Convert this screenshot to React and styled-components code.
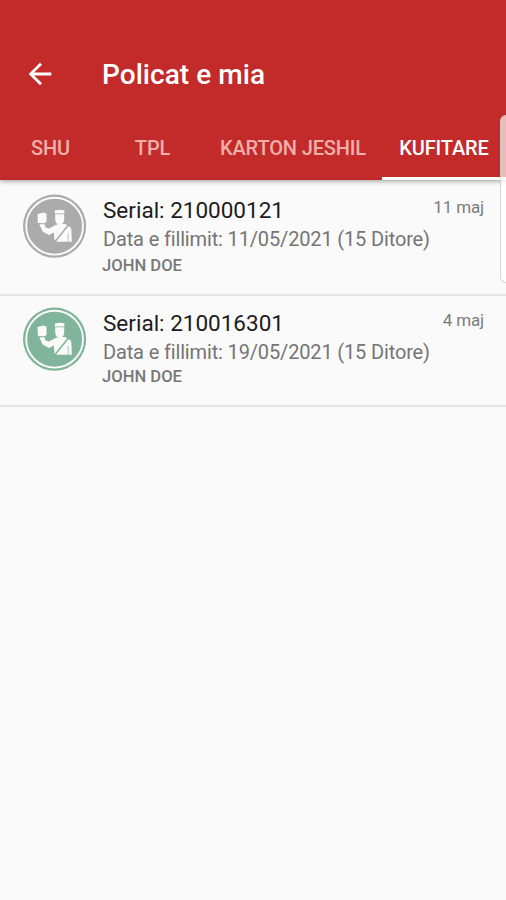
import React from "react";
import styled, { createGlobalStyle } from "styled-components";

const Global = createGlobalStyle`
  * { box-sizing: border-box; }
  body { margin: 0; background: #fafafa; font-family: Roboto, "Noto Sans", sans-serif; }
`;

const Screen = styled.div`
  position: relative;
  width: 506px;
  height: 900px;
  overflow: hidden;
  background: #fafafa;
`;

const Header = styled.header`
  position: relative;
  height: 180px;
  padding-top: 35px;
  background: #c32a2a;
  box-shadow: 0 1px 5px rgba(0, 0, 0, 0.4);
`;

const AppBar = styled.div`
  display: flex;
  align-items: center;
  height: 80px;
  padding-left: 23px;
`;

const BackButton = styled.button`
  display: flex;
  width: 34px;
  height: 34px;
  margin: -3px 0 0;
  padding: 0;
  border: 0;
  background: none;
`;

const Title = styled.h1`
  margin: 0 0 0 45px;
  font-size: 28px;
  line-height: 40px;
  font-weight: 500;
  letter-spacing: 0.05px;
  color: #fff;
  white-space: nowrap;
`;

const Tabs = styled.nav`
  display: grid;
  grid-template-columns: 101px 103px 178px 124px;
  height: 65px;
`;

const Tab = styled.div`
  display: flex;
  align-items: center;
  justify-content: center;
  padding-top: ${(p) => (p.$active ? 3 : 0)}px;
  border-bottom: ${(p) => (p.$active ? "3px solid #fff" : "0")};
  font-size: 20px;
  font-weight: 500;
  letter-spacing: -0.14px;
  white-space: nowrap;
  color: ${(p) => (p.$active ? "#fff" : "#f0b0a9")};
`;

const Row = styled.article`
  display: flex;
  align-items: flex-start;
  height: ${(p) => p.$height}px;
  padding: ${(p) => p.$top}px 22px 0 23px;
  border-bottom: 2px solid #e6e6e6;
`;

const Avatar = styled.svg`
  flex: none;
  width: 64px;
  height: 64px;
  margin-top: -3px;
`;

const Details = styled.div`
  flex: 1;
  min-width: 0;
  margin-left: 16px;
  white-space: nowrap;
`;

const Serial = styled.div`
  margin: -1px 0 1px;
  font-size: 22.5px;
  line-height: 28px;
  color: #1c1c1c;
`;

const StartDate = styled.div`
  font-size: 20px;
  line-height: 29px;
  letter-spacing: -0.15px;
  color: #757575;
`;

const Holder = styled.div`
  margin: ${(p) => p.$shift}px 0 0 -1px;
  font-size: 16.6px;
  line-height: 24px;
  font-weight: 500;
  color: #787878;
`;

const DateLabel = styled.time`
  flex: none;
  margin-top: -1px;
  font-size: 17px;
  line-height: 22px;
  letter-spacing: -0.15px;
  color: #7b7b7b;
  white-space: nowrap;
`;

const EdgeHandle = styled.div`
  position: absolute;
  top: 115px;
  left: 500px;
  width: 14px;
  height: 168px;
  border: 1px solid rgba(200, 200, 200, 0.75);
  border-radius: 6px;
  background: rgba(255, 255, 255, 0.68);
`;

function OfficerAvatar({ color }) {
  return (
    <Avatar viewBox="0 0 64 64">
      <circle cx="31.6" cy="32.2" r="31.6" fill={color} />
      <circle cx="31.6" cy="32.2" r="28.4" fill="none" stroke="#fafafa" strokeWidth="1.9" />
      <g fill="#fafafa">
        <path d="M14.5 20l6-1.5 3 1.3v8l-2 1.5-6.6-.3z" />
        <path d="M16.3 30.3h5.2l1 3.2 3.6 1 6.4-3.6 3.5-.8h6.5l1.5 1.5-12.4 15.4-.8-8.4-4.8 2.4-6.2-3.2z" />
        <path d="M31.8 16.4q4.8-1.4 9.6 0v3.1h-9.6z" />
        <path d="M32.2 20.2h9v5.3q-.4 5-4.5 5t-4.5-5z" />
        <path d="M45.4 32.3q2.8.6 3 3.6l.4 11.9H33z" />
      </g>
      <path d="M45.2 39v9" stroke={color} strokeWidth="0.7" />
    </Avatar>
  );
}

const policies = [
  { serial: "210000121", start: "11/05/2021", date: "11 maj", color: "#ababab", height: 116, top: 17, shift: 0 },
  { serial: "210016301", start: "19/05/2021", date: "4 maj", color: "#80b59b", height: 111, top: 14, shift: -2 },
];

export default function App() {
  return (
    <Screen>
      <Global />
      <Header>
        <AppBar>
          <BackButton aria-label="Prapa">
            <svg width="34" height="34" viewBox="0 0 24 24" fill="#fff">
              <path d="M20 11H7.83l5.59-5.59L12 4l-8 8 8 8 1.41-1.41L7.83 13H20z" />
            </svg>
          </BackButton>
          <Title>Policat e mia</Title>
        </AppBar>
        <Tabs>
          <Tab>SHU</Tab>
          <Tab>TPL</Tab>
          <Tab>KARTON JESHIL</Tab>
          <Tab $active>KUFITARE</Tab>
        </Tabs>
      </Header>
      <main>
        {policies.map((p) => (
          <Row key={p.serial} $height={p.height} $top={p.top}>
            <OfficerAvatar color={p.color} />
            <Details>
              <Serial>Serial: {p.serial}</Serial>
              <StartDate>Data e fillimit: {p.start} (15 Ditore)</StartDate>
              <Holder $shift={p.shift}>JOHN DOE</Holder>
            </Details>
            <DateLabel>{p.date}</DateLabel>
          </Row>
        ))}
      </main>
      <EdgeHandle />
    </Screen>
  );
}
